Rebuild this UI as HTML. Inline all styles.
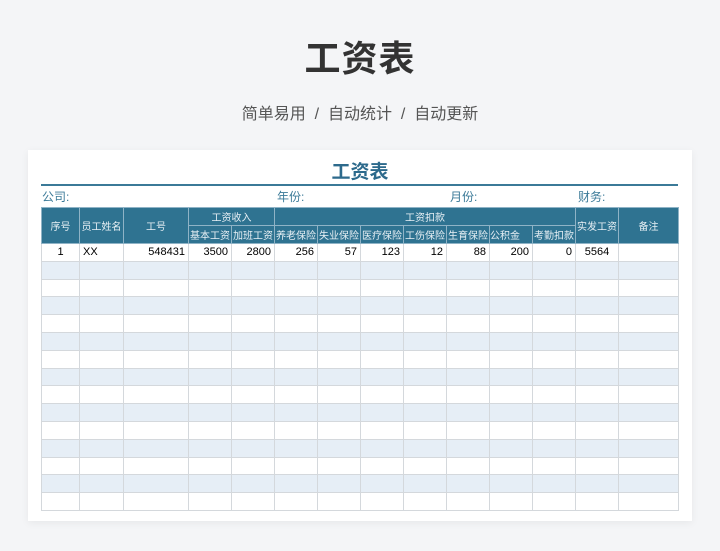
<!DOCTYPE html>
<html><head><meta charset="utf-8"><style>
*{margin:0;padding:0;box-sizing:border-box}
body{width:720px;height:551px;background:#f4f5f7;font-family:"Liberation Sans","Noto Sans CJK SC",sans-serif;position:relative;overflow:hidden}
.h1{position:absolute;top:30px;left:0;width:720px;text-align:center;font-size:36px;font-weight:bold;color:#333;letter-spacing:1px}
.sub{position:absolute;top:100px;left:0;width:720px;text-align:center;font-size:16px;color:#555}
.card{position:absolute;left:28px;top:150px;width:664px;height:371px;background:#fff;box-shadow:0 2px 8px rgba(0,0,0,.06)}
.t{position:absolute;top:157px;left:0;width:720px;text-align:center;font-size:19px;font-weight:bold;color:#2d6a8c}
.line{position:absolute;left:41px;top:184px;width:637px;height:2px;background:#3b7a98}
.lab{position:absolute;top:188px;font-size:12px;color:#3b7a98}
table{position:absolute;left:41px;top:207px;border-collapse:collapse;table-layout:fixed;font-size:11px}
td{border:1px solid #d4d8dc;height:17.8px;padding:0 3px;white-space:nowrap;overflow:hidden}
th{background:#2f7391;color:#e8f0f5;font-weight:normal;font-size:10px;border:1px solid #8fb3c6;height:18px;padding:0}
tr.b td{background:#e6eef6}
.r{text-align:right}.c{text-align:center}
</style></head><body>
<div class="h1">工资表</div>
<div class="sub">简单易用 &nbsp;/ &nbsp;自动统计 &nbsp;/ &nbsp;自动更新</div>
<div class="card"></div>
<div class="t">工资表</div>
<div class="line"></div>
<div class="lab" style="left:42px">公司:</div>
<div class="lab" style="left:277px">年份:</div>
<div class="lab" style="left:450px">月份:</div>
<div class="lab" style="left:578px">财务:</div>
<table>
<colgroup><col style="width:38px"><col style="width:44px"><col style="width:65px"><col style="width:43px"><col style="width:43px"><col style="width:43px"><col style="width:43px"><col style="width:43px"><col style="width:43px"><col style="width:43px"><col style="width:43px"><col style="width:43px"><col style="width:43px"><col style="width:60px"></colgroup>
<tr><th rowspan="2">序号</th><th rowspan="2">员工姓名</th><th rowspan="2">工号</th><th colspan="2">工资收入</th><th colspan="7">工资扣款</th><th rowspan="2">实发工资</th><th rowspan="2">备注</th></tr>
<tr><th>基本工资</th><th>加班工资</th><th>养老保险</th><th>失业保险</th><th>医疗保险</th><th>工伤保险</th><th>生育保险</th><th style="text-align:left">公积金</th><th>考勤扣款</th></tr>
<tr><td class="c">1</td><td>XX</td><td class="r">548431</td><td class="r">3500</td><td class="r">2800</td><td class="r">256</td><td class="r">57</td><td class="r">123</td><td class="r">12</td><td class="r">88</td><td class="r">200</td><td class="r">0</td><td class="c">5564</td><td></td></tr>
<tr class="b"><td></td><td></td><td></td><td></td><td></td><td></td><td></td><td></td><td></td><td></td><td></td><td></td><td></td><td></td></tr>
<tr><td></td><td></td><td></td><td></td><td></td><td></td><td></td><td></td><td></td><td></td><td></td><td></td><td></td><td></td></tr>
<tr class="b"><td></td><td></td><td></td><td></td><td></td><td></td><td></td><td></td><td></td><td></td><td></td><td></td><td></td><td></td></tr>
<tr><td></td><td></td><td></td><td></td><td></td><td></td><td></td><td></td><td></td><td></td><td></td><td></td><td></td><td></td></tr>
<tr class="b"><td></td><td></td><td></td><td></td><td></td><td></td><td></td><td></td><td></td><td></td><td></td><td></td><td></td><td></td></tr>
<tr><td></td><td></td><td></td><td></td><td></td><td></td><td></td><td></td><td></td><td></td><td></td><td></td><td></td><td></td></tr>
<tr class="b"><td></td><td></td><td></td><td></td><td></td><td></td><td></td><td></td><td></td><td></td><td></td><td></td><td></td><td></td></tr>
<tr><td></td><td></td><td></td><td></td><td></td><td></td><td></td><td></td><td></td><td></td><td></td><td></td><td></td><td></td></tr>
<tr class="b"><td></td><td></td><td></td><td></td><td></td><td></td><td></td><td></td><td></td><td></td><td></td><td></td><td></td><td></td></tr>
<tr><td></td><td></td><td></td><td></td><td></td><td></td><td></td><td></td><td></td><td></td><td></td><td></td><td></td><td></td></tr>
<tr class="b"><td></td><td></td><td></td><td></td><td></td><td></td><td></td><td></td><td></td><td></td><td></td><td></td><td></td><td></td></tr>
<tr><td></td><td></td><td></td><td></td><td></td><td></td><td></td><td></td><td></td><td></td><td></td><td></td><td></td><td></td></tr>
<tr class="b"><td></td><td></td><td></td><td></td><td></td><td></td><td></td><td></td><td></td><td></td><td></td><td></td><td></td><td></td></tr>
<tr><td></td><td></td><td></td><td></td><td></td><td></td><td></td><td></td><td></td><td></td><td></td><td></td><td></td><td></td></tr>
</table>
</body></html>
